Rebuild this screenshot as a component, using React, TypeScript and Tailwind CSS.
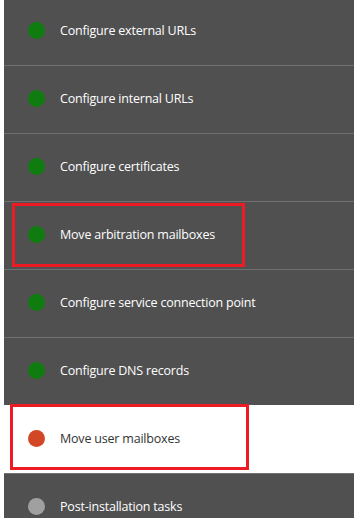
const steps = [
    { label: 'Configure external URLs', status: 'done' },
    { label: 'Configure internal URLs', status: 'done' },
    { label: 'Configure certificates', status: 'done' },
    { label: 'Move arbitration mailboxes', status: 'done' },
    { label: 'Configure service connection point', status: 'done' },
    { label: 'Configure DNS records', status: 'done' },
    { label: 'Move user mailboxes', status: 'current' },
    { label: 'Post-installation tasks', status: 'pending' },
];

const dotColor: Record<string, string> = {
    done: 'bg-[#107c10]',
    current: 'bg-[#d24726]',
    pending: 'bg-[#a0a0a0]',
};

export default function App() {
    return (
        <div className="relative h-[518px] w-[356px] overflow-hidden bg-white pl-[4px] pr-[2px]" style={{ fontFamily: '"Open Sans", "Noto Sans", sans-serif' }}>
            <div className="-mt-[3px] bg-[#505050]">
                {steps.map((s) => {
                    const current = s.status === 'current';
                    return (
                        <div
                            key={s.label}
                            className={`flex h-[68px] items-center border-t pl-[24px] ${current ? 'border-white bg-white text-[#333333]' : 'border-[#707070] text-white'}`}
                        >
                            <span className={`-mt-[3px] h-[17px] w-[17px] shrink-0 rounded-full ${dotColor[s.status]}`} />
                            <span className="ml-[15px] text-[12.5px] tracking-[-0.2px]">{s.label}</span>
                        </div>
                    );
                })}
            </div>

            {/* annotation boxes */}
            <div className="absolute left-[12px] top-[203px] h-[64px] w-[233px] border-[3px] border-[#ed1c24]" />
            <div className="absolute left-[10px] top-[404px] h-[66px] w-[239px] border-[3px] border-[#ed1c24]" />
        </div>
    );
}
